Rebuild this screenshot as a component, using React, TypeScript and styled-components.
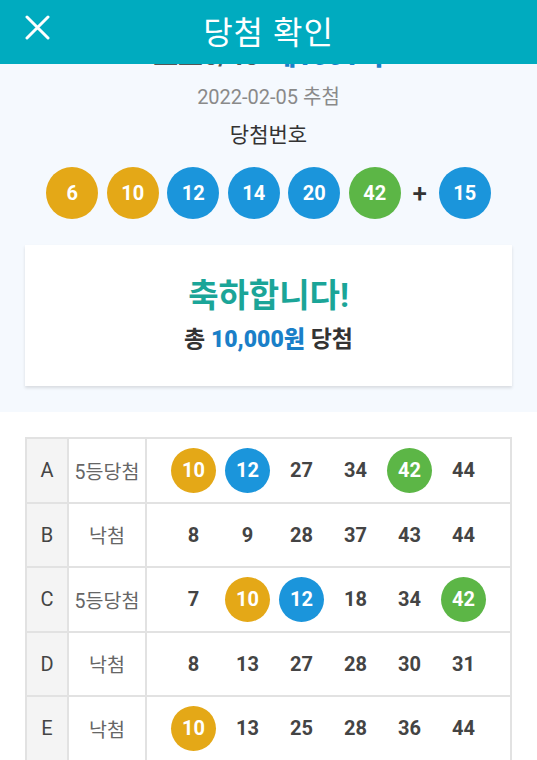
import styled, { createGlobalStyle } from "styled-components";

const FONT = `Roboto, "Noto Sans CJK KR", "Noto Sans", sans-serif`;

const GlobalStyle = createGlobalStyle`
  html, body {
    margin: 0;
    padding: 0;
    background: #fff;
    font-family: ${FONT};
  }
`;

type Tone = "yellow" | "blue" | "green" | "none";

const tones: Record<Tone, string> = {
  yellow: "#e4a817",
  blue: "#1b95db",
  green: "#5cb646",
  none: "transparent",
};

const toneOf = (n: number): Tone => {
  if (n <= 10) return "yellow";
  if (n <= 20) return "blue";
  if (n <= 40) return "none";
  return "green";
};

const winning = [6, 10, 12, 14, 20, 42];
const bonus = 15;

const games = [
  { key: "A", result: "5등당첨", nums: [10, 12, 27, 34, 42, 44] },
  { key: "B", result: "낙첨", nums: [8, 9, 28, 37, 43, 44] },
  { key: "C", result: "5등당첨", nums: [7, 10, 12, 18, 34, 42] },
  { key: "D", result: "낙첨", nums: [8, 13, 27, 28, 30, 31] },
  { key: "E", result: "낙첨", nums: [10, 13, 25, 28, 36, 44] },
];

const Header = styled.header`
  position: fixed;
  top: 0;
  left: 0;
  right: 0;
  height: 64px;
  z-index: 10;
  background: #00abbf;
  display: flex;
  align-items: center;
  justify-content: center;
`;

const Close = styled.button`
  position: absolute;
  left: 22px;
  top: 12px;
  width: 31px;
  height: 31px;
  padding: 0;
  border: 0;
  background: none;
  display: flex;
  align-items: center;
  justify-content: center;
`;

const Title = styled.h1`
  margin: 0 0 4px;
  color: #fff;
  font-size: 32px;
  font-weight: 400;
  letter-spacing: 1px;
`;

const Top = styled.section`
  background: #f5f9fe;
  padding: 39px 25px 26px;
  display: flex;
  flex-direction: column;
  align-items: center;
`;

const Round = styled.div`
  font-size: 27px;
  line-height: 34px;
  font-weight: 700;
  color: #555;

  & > b {
    margin-left: 12px;
    color: #1a7fc8;
  }
`;

const DrawDate = styled.div`
  margin-top: 11px;
  font-size: 20px;
  line-height: 26px;
  color: #8a8a8a;
`;

const Caption = styled.div`
  margin-top: 12px;
  font-size: 21px;
  line-height: 26px;
  color: #333;
`;

const Balls = styled.div`
  margin-top: 19px;
  display: flex;
  align-items: center;
  gap: 8.5px;
`;

const Ball = styled.span<{ $tone: Tone; $size: number }>`
  width: ${(p) => p.$size}px;
  height: ${(p) => p.$size}px;
  border-radius: 50%;
  background: ${(p) => tones[p.$tone]};
  color: ${(p) => (p.$tone === "none" ? "#444" : "#fff")};
  font-size: 20px;
  font-weight: 700;
  display: flex;
  align-items: center;
  justify-content: center;
`;

const Plus = styled.span`
  width: 21px;
  text-align: center;
  font-size: 26px;
  font-weight: 500;
  color: #333;
`;

const Card = styled.div`
  align-self: stretch;
  margin-top: 26px;
  height: 141px;
  background: #fff;
  box-shadow: 0 2px 3px rgba(0, 0, 0, 0.12);
  display: flex;
  flex-direction: column;
  align-items: center;
  justify-content: center;
  gap: 9px;
`;

const Congrats = styled.div`
  font-size: 33px;
  line-height: 40px;
  font-weight: 700;
  color: #1ba598;
`;

const Prize = styled.div`
  font-size: 23px;
  line-height: 30px;
  font-weight: 700;
  color: #333;

  & > b {
    color: #1a7fc8;
  }
`;

const Table = styled.div`
  margin: 25px 25px 0;
  border: 2px solid #e2e2e2;
  display: grid;
  grid-template-columns: 42px 78px 1fr;
`;

const Cell = styled.div<{ $head?: boolean; $last?: boolean }>`
  height: 62.5px;
  display: flex;
  align-items: center;
  justify-content: center;
  border-bottom: ${(p) => (p.$last ? "0" : "2px solid #e2e2e2")};
  border-right: 2px solid #e2e2e2;
  background: ${(p) => (p.$head ? "#f4f4f4" : "#fff")};
  color: ${(p) => (p.$head ? "#444" : "#666")};
  font-size: ${(p) => (p.$head ? 20 : 19.5)}px;
`;

const Numbers = styled.div<{ $last?: boolean }>`
  height: 62.5px;
  border-bottom: ${(p) => (p.$last ? "0" : "2px solid #e2e2e2")};
  display: flex;
  align-items: center;
  justify-content: center;
  gap: 9px;
`;

export default function App() {
  return (
    <>
      <GlobalStyle />
      <Header>
        <Close aria-label="닫기">
          <svg width="25" height="25" viewBox="0 0 25 25">
            <path d="M2 2 L23 23 M23 2 L2 23" stroke="#fff" strokeWidth="3" strokeLinecap="round" />
          </svg>
        </Close>
        <Title>당첨 확인</Title>
      </Header>
      <Top>
        <Round>
          로또6/45<b>제1001회</b>
        </Round>
        <DrawDate>2022-02-05 추첨</DrawDate>
        <Caption>당첨번호</Caption>
        <Balls>
          {winning.map((n) => (
            <Ball key={n} $tone={toneOf(n)} $size={52}>
              {n}
            </Ball>
          ))}
          <Plus>+</Plus>
          <Ball $tone={toneOf(bonus)} $size={52}>
            {bonus}
          </Ball>
        </Balls>
        <Card>
          <Congrats>축하합니다!</Congrats>
          <Prize>
            총 <b>10,000원</b> 당첨
          </Prize>
        </Card>
      </Top>
      <Table>
        {games.map((g, i) => {
          const last = i === games.length - 1;
          return [
            <Cell key={g.key + "k"} $head $last={last}>
              {g.key}
            </Cell>,
            <Cell key={g.key + "r"} $last={last}>
              {g.result}
            </Cell>,
            <Numbers key={g.key + "n"} $last={last}>
              {g.nums.map((n) => (
                <Ball key={n} $tone={winning.includes(n) ? toneOf(n) : "none"} $size={45}>
                  {n}
                </Ball>
              ))}
            </Numbers>,
          ];
        })}
      </Table>
    </>
  );
}
